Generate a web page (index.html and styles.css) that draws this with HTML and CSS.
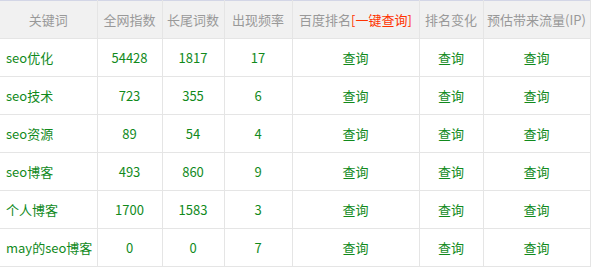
FILE: index.html
```html
<!DOCTYPE html>
<html lang="zh-CN">
<head>
<meta charset="utf-8">
<link rel="stylesheet" href="styles.css">
</head>
<body>
<table class="kw-table">
  <colgroup>
    <col class="c1"><col class="c2"><col class="c3"><col class="c4"><col class="c5"><col class="c6"><col class="c7">
  </colgroup>
  <thead>
    <tr>
      <th>关键词</th>
      <th>全网指数</th>
      <th>长尾词数</th>
      <th>出现频率</th>
      <th>百度排名<span class="hot">[一键查询]</span></th>
      <th>排名变化</th>
      <th>预估带来流量(IP)</th>
    </tr>
  </thead>
  <tbody>
    <tr><td class="kw">seo优化</td><td>54428</td><td>1817</td><td>17</td><td>查询</td><td>查询</td><td>查询</td></tr>
    <tr><td class="kw">seo技术</td><td>723</td><td>355</td><td>6</td><td>查询</td><td>查询</td><td>查询</td></tr>
    <tr><td class="kw">seo资源</td><td>89</td><td>54</td><td>4</td><td>查询</td><td>查询</td><td>查询</td></tr>
    <tr><td class="kw">seo博客</td><td>493</td><td>860</td><td>9</td><td>查询</td><td>查询</td><td>查询</td></tr>
    <tr><td class="kw">个人博客</td><td>1700</td><td>1583</td><td>3</td><td>查询</td><td>查询</td><td>查询</td></tr>
    <tr><td class="kw">may的seo博客</td><td>0</td><td>0</td><td>7</td><td>查询</td><td>查询</td><td>查询</td></tr>
  </tbody>
</table>
</body>
</html>
```

FILE: styles.css
```css
html, body {
  margin: 0;
  padding: 0;
  background: #ffffff;
}
body {
  font-family: "Noto Sans CJK SC", "Open Sans", "Liberation Sans", sans-serif;
  font-size: 13px;
}
.kw-table {
  border-collapse: collapse;
  table-layout: fixed;
  width: 590px;
  border-top: 1px solid #d3d6e6;
}
.c1 { width: 97px; }
.c2 { width: 65px; }
.c3 { width: 62px; }
.c4 { width: 68px; }
.c5 { width: 127px; }
.c6 { width: 64px; }
.c7 { width: 107px; }
.kw-table th,
.kw-table td {
  border: 1px solid #e5e5e5;
  text-align: center;
  padding: 0;
  white-space: nowrap;
  overflow: hidden;
}
.kw-table th:first-child,
.kw-table td:first-child {
  border-left: none;
}
.kw-table th {
  height: 37px;
  background: #f1f1f1;
  color: #999999;
  font-weight: normal;
  border-top: none;
}
.kw-table td {
  height: 37px;
  color: #118a1c;
}
.kw-table td.kw {
  text-align: left;
  padding-left: 6px;
}
.hot {
  color: #ff3300;
}
```
